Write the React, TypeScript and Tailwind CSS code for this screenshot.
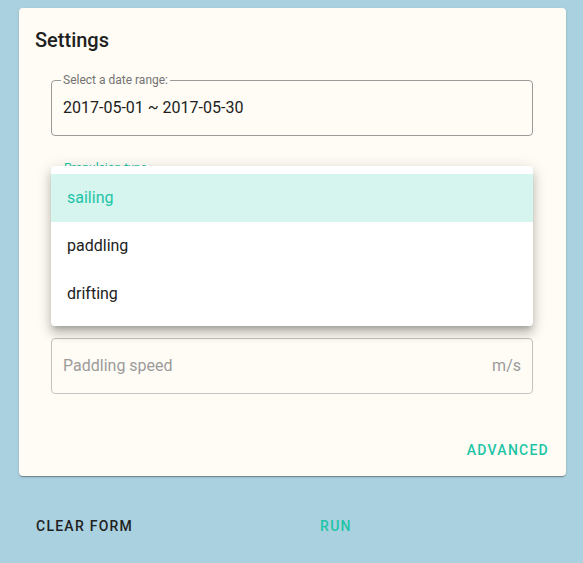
import React from 'react';

const font = { fontFamily: 'Roboto, "Noto Sans", sans-serif' };

function OutlinedField({
  label,
  value,
  placeholder,
  suffix,
  focused,
  className,
}: {
  label?: string;
  value?: string;
  placeholder?: string;
  suffix?: string;
  focused?: boolean;
  className?: string;
}) {
  return (
    <div
      className={
        'relative w-[482px] h-[56px] rounded flex items-center px-[11px] ' +
        (focused ? 'border-2 border-[#1dc4a6] ' : value ? 'border border-[#9a9a9a] ' : 'border border-[#c2c2c2] ') +
        (className ?? '')
      }
    >
      {label && (
        <span
          className={
            'absolute top-[-8px] left-[9px] px-[2px] bg-[#fffcf5] text-[12px] leading-[14px] ' +
            (focused ? 'text-[#1dc4a6]' : 'text-[#737373]')
          }
        >
          {label}
        </span>
      )}
      {value ? (
        <span className="text-[16px] text-[#212121]">{value}</span>
      ) : (
        <span className="text-[16px] text-[#9b9b9b]">{placeholder}</span>
      )}
      {suffix && <span className="ml-auto text-[16px] text-[#9b9b9b]">{suffix}</span>}
    </div>
  );
}

export default function App() {
  const options = ['sailing', 'paddling', 'drifting'];

  return (
    <div className="min-h-screen bg-[#aad1df] pt-2 pl-[19px]" style={font}>
      {/* Settings card */}
      <div className="relative w-[547px] h-[468px] bg-[#fffcf5] rounded shadow-[0_2px_1px_-1px_rgba(0,0,0,0.2),0_1px_1px_0_rgba(0,0,0,0.14),0_1px_3px_0_rgba(0,0,0,0.12)] p-4">
        <h2 className="text-[20px] leading-[32px] font-medium text-[#212121]">Settings</h2>

        <div className="pl-4 flex flex-col">
          <OutlinedField className="mt-6" label="Select a date range:" value="2017-05-01 ~ 2017-05-30" />
          <OutlinedField className="mt-[31px]" label="Propulsion type" focused />
          <div className="h-[115px]" />
          <OutlinedField placeholder="Paddling speed" suffix="m/s" />
        </div>

        <div className="absolute right-[9px] bottom-2">
          <button className="h-9 px-2 text-[14px] font-medium tracking-[1.25px] text-[#1dc4a6] uppercase">
            Advanced
          </button>
        </div>

        {/* Open select menu */}
        <ul className="absolute left-8 top-[158px] w-[482px] bg-white rounded py-2 shadow-[0_5px_5px_-3px_rgba(0,0,0,0.2),0_8px_10px_1px_rgba(0,0,0,0.14),0_3px_14px_2px_rgba(0,0,0,0.12)]">
          {options.map((o, i) => (
            <li
              key={o}
              className={
                'h-12 flex items-center px-4 text-[16px] ' +
                (i === 0 ? 'bg-[#d6f5ef] text-[#1dc4a6]' : 'text-[#212121]')
              }
            >
              {o}
            </li>
          ))}
        </ul>
      </div>

      {/* Bottom actions */}
      <div className="flex items-center gap-[171px] mt-8 pl-[9px]">
        <button className="h-9 px-2 text-[14px] font-medium tracking-[1.25px] text-[#212121] uppercase">
          Clear form
        </button>
        <button className="h-9 px-2 text-[14px] font-medium tracking-[1.25px] text-[#1dc4a6] uppercase">
          Run
        </button>
      </div>
    </div>
  );
}
